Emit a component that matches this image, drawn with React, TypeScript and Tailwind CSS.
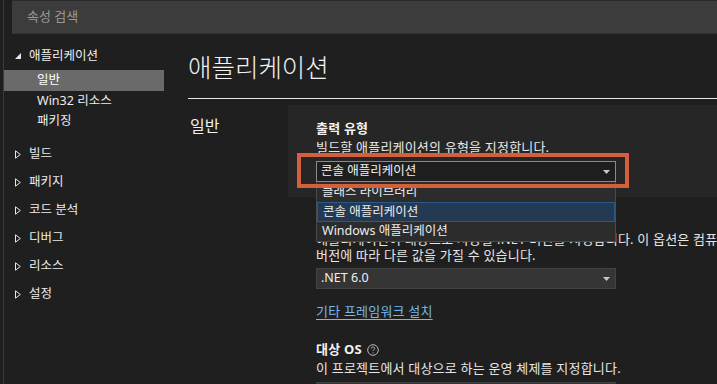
import { ReactNode } from 'react';

const font = "font-['Noto_Sans','Noto_Sans_CJK_KR',sans-serif]";

function Caret() {
  return (
    <svg width="7" height="4" viewBox="0 0 7 4" className="shrink-0">
      <path d="M0 0 H7 L3.5 4 Z" fill="#c8c8c8" />
    </svg>
  );
}

function OpenArrow() {
  return (
    <svg width="6" height="6" viewBox="0 0 6 6" className="shrink-0">
      <path d="M6 0 V6 H0 Z" fill="#e8e8e8" />
    </svg>
  );
}

function ClosedArrow() {
  return (
    <svg width="6" height="9" viewBox="0 0 6 9" className="shrink-0">
      <path d="M0.5 0.8 L5.3 4.5 L0.5 8.2 Z" fill="none" stroke="#e8e8e8" strokeWidth="1" />
    </svg>
  );
}

function HelpIcon() {
  return (
    <svg width="12" height="12" viewBox="0 0 12 12" className="shrink-0">
      <circle cx="6" cy="6" r="5.3" fill="none" stroke="#b8b8b8" strokeWidth="1" />
      <path d="M4.3 4.6 C4.3 3.5 5.1 3 6 3 C7 3 7.7 3.6 7.7 4.4 C7.7 5.5 6.1 5.6 6.1 7" fill="none" stroke="#b8b8b8" strokeWidth="1" />
      <circle cx="6.1" cy="8.8" r="0.6" fill="#b8b8b8" />
    </svg>
  );
}

function NavGroup({ label }: { label: string }) {
  return (
    <div className="h-[28px] flex items-center pl-[11px] gap-[8px] text-[12.5px] text-[#ececec]">
      <ClosedArrow />
      <span>{label}</span>
    </div>
  );
}

function Select({ value, dark, children }: { value: string; dark?: boolean; children?: ReactNode }) {
  return (
    <div
      className={`relative w-[300px] h-[21px] flex items-center justify-between pl-[4px] pr-[5px] text-[12.5px] text-[#f0f0f0] border ${
        dark ? 'bg-[#1e1e1e] border-[#8a8a8a]' : 'bg-[#353535] border-[#444444]'
      }`}
    >
      <span>{value}</span>
      <Caret />
      {children}
    </div>
  );
}

export default function App() {
  const navGroups = ['빌드', '패키지', '코드 분석', '디버그', '리소스', '설정'];

  return (
    <div className={`w-[717px] h-[384px] bg-[#1f1f1f] overflow-hidden ${font}`}>
      <div className="h-full ml-[3px] border-l border-[#3c3c3c] flex flex-col">
        {/* Search bar */}
        <div className="ml-[8px] h-[34px] shrink-0 bg-[#3c3c3c] border-t border-[#2a2a2a] border-b border-b-[#333333] flex items-center pl-[15px] text-[13px] text-[#9a9a9a]">
          속성 검색
        </div>

        <div className="flex flex-1 min-h-0">
          {/* Sidebar */}
          <div className="w-[160px] shrink-0 flex flex-col">
            <div className="mt-[11px] h-[22px] flex items-center pl-[11px] gap-[8px] text-[12.5px] text-[#f0f0f0]">
              <OpenArrow />
              <span>애플리케이션</span>
            </div>
            <div className="mt-[3px] h-[21px] flex items-center pl-[33px] bg-[#6a6a6a] text-[12.5px] text-white">일반</div>
            <div className="h-[20px] flex items-center pl-[33px] text-[12.5px] text-[#ececec]">Win32 리소스</div>
            <div className="h-[20px] flex items-center pl-[33px] text-[12.5px] text-[#ececec]">패키징</div>
            <div className="mt-[9px] flex flex-col">
              {navGroups.map(g => (
                <NavGroup key={g} label={g} />
              ))}
            </div>
          </div>

          {/* Main */}
          <div className="flex-1 min-w-0 pl-[24px] flex flex-col">
            <div className="mt-[17px] h-[32px] text-[25.5px] leading-[32px] text-[#f2f2f2] font-light">애플리케이션</div>
            <div className="mt-[15px] h-px bg-[#e6e6e6] shrink-0" />

            <div className="mt-[6px] flex">
              <div className="w-[100px] shrink-0 pt-[10px] pl-[2px] text-[16px] leading-[22px] text-[#f0f0f0]">일반</div>

              <div className="flex-1 min-w-0 flex flex-col text-[13px] tracking-[0.2px]">
                {/* Output type panel */}
                <div className="bg-[#262626] pl-[28px] pt-[14px] pb-[15px] relative z-10">
                  <div className="h-[18px] leading-[18px] font-bold text-[#f2f2f2]">출력 유형</div>
                  <div className="mt-px h-[18px] leading-[18px] text-[#e6e6e6] whitespace-nowrap">
                    빌드할 애플리케이션의 유형을 지정합니다.
                  </div>
                  <div className="mt-[5px] tracking-normal">
                    <Select value="콘솔 애플리케이션" dark>
                      {/* highlight box */}
                      <div className="absolute -left-[20px] -right-[14px] -top-[9px] -bottom-[7px] border-[4px] border-[#d3603b] z-30 pointer-events-none" />
                      {/* open dropdown */}
                      <div className="absolute -left-px top-[20px] w-[300px] h-[60px] bg-[#2c2c2c] border border-t-0 border-[#4a4a4a] flex flex-col text-[12.5px] text-[#ececec] z-20">
                        <div className="h-[20px] flex items-center pl-[5px]">클래스 라이브러리</div>
                        <div className="h-[20px] flex items-center pl-[5px] bg-[#243a53] border border-[#2b5a8a]">콘솔 애플리케이션</div>
                        <div className="h-[19px] flex items-center pl-[5px]">Windows 애플리케이션</div>
                      </div>
                    </Select>
                  </div>
                </div>

                {/* Target framework */}
                <div className="pl-[28px] flex flex-col">
                  <div className="mt-[16px] h-[18px] leading-[18px] font-bold text-[#f2f2f2]">대상 프레임워크</div>
                  <div className="leading-[16px] text-[#e6e6e6] whitespace-nowrap">
                    애플리케이션이 대상으로 사용할 .NET 버전을 지정합니다. 이 옵션은 컴퓨터에 설치된 .NET
                  </div>
                  <div className="leading-[16px] text-[#e6e6e6] whitespace-nowrap">
                    버전에 따라 다른 값을 가질 수 있습니다.
                  </div>
                  <div className="mt-[5px] tracking-normal">
                    <Select value=".NET 6.0" />
                  </div>
                  <div className="mt-[13px] h-[18px] leading-[18px] text-[#75b7ef] underline underline-offset-[3px] self-start">
                    기타 프레임워크 설치
                  </div>

                  {/* Target OS */}
                  <div className="mt-[21px] h-[18px] flex items-center gap-[5px] font-bold text-[#f2f2f2]">
                    <span>대상 OS</span>
                    <HelpIcon />
                  </div>
                  <div className="h-[18px] leading-[18px] text-[#e6e6e6] whitespace-nowrap">
                    이 프로젝트에서 대상으로 하는 운영 체제를 지정합니다.
                  </div>
                  <div className="mt-[5px] tracking-normal">
                    <Select value="(없음)" />
                  </div>
                </div>
              </div>
            </div>
          </div>
        </div>
      </div>
    </div>
  );
}
